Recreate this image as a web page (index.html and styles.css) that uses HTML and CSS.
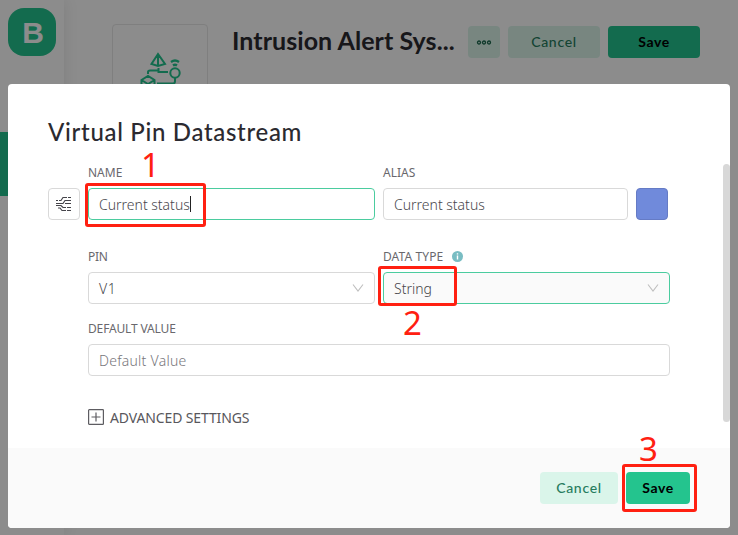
FILE: index.html
```html
<!DOCTYPE html>
<html lang="en">
<head>
<meta charset="utf-8">
<title>Virtual Pin Datastream</title>
<link rel="stylesheet" href="styles.css">
</head>
<body>
<div class="page">
  <aside class="sidebar">
    <div class="logo">B</div>
    <div class="sidebar-active"></div>
  </aside>
  <header class="page-header">
    <div class="device">
      <svg width="44" height="44" viewBox="0 0 44 44" fill="none" stroke="#24c48e" stroke-width="2">
        <path d="M18 2L11.500 12L18 14L25 12ZM18 2V14M8 22V20Q8 18.500 10 18.500H18.500V16M18.500 18.500V20H28M1.500 28L8 24L14.500 28V36L8 40L1.500 36ZM1.500 28L8 32L14.500 28M8 32V40M17 31.500H33Q35 31.500 35 29V26"/>
        <circle cx="35" cy="21" r="4.700"/>
        <path d="M31 10Q35 7 39 10M33 13.500Q35 12 37 13.500" stroke-width="2.300"/>
      </svg>
    </div>
    <h1><span>Intrusion Alert Sys...</span></h1>
    <button class="btn soft more"><svg width="16" height="8" viewBox="0 0 16 8" fill="none" stroke="#1c684d" stroke-width="1.300"><circle cx="3" cy="4.500" r="1.500"/><circle cx="8" cy="4.500" r="1.500"/><circle cx="13" cy="4.500" r="1.500"/></svg></button>
    <button class="btn soft wide">Cancel</button>
    <button class="btn primary wide">Save</button>
  </header>
</div>
<div class="mask"></div>
<main class="modal">
  <h2><span>Virtual Pin Datastream</span></h2>
  <section class="form">
    <div class="row first">
      <button class="icon-box">
        <svg width="16" height="16" viewBox="0 0 16 16" fill="none" stroke="#45444a" stroke-width="1.200"><path d="M0 4.500H2M3 4.500H5L7 1.500H11M12 1.500H15M0 7.500H7L9 4.500H15M9 7.500H15M0 9.500H5L7 11.500H10M11 11.500H15M2 12H4L6 14.500H10M11 14.500H15"/></svg>
      </button>
      <label class="field name"><span class="label">NAME</span><span class="input active"><span class="value">Current status</span><i class="caret"></i></span></label>
      <label class="field alias"><span class="label">ALIAS</span><span class="input"><span class="value">Current status</span></span></label>
      <div class="swatch"></div>
    </div>
    <div class="row second">
      <label class="field half"><span class="label l-pin">PIN</span><span class="input select"><span class="value v-pin">V1</span><svg class="chevron" width="12" height="10" viewBox="0 0 12 10"><path d="M1 1.500L6 8L11 1.500"/></svg></span></label>
      <label class="field half"><span class="label"><span class="l-type">DATA TYPE</span><svg class="info" width="11" height="11" viewBox="0 0 11 11"><circle cx="5.500" cy="5.500" r="5.500" fill="#79bdc3"/><path d="M5.500 2.200V3.400M5.500 4.500V8.600" stroke="#fff" stroke-width="1.400"/></svg></span><span class="input select active filled"><span class="value">String</span><svg class="chevron" width="12" height="10" viewBox="0 0 12 10"><path d="M1 1.500L6 8L11 1.500"/></svg></span></label>
    </div>
    <label class="field default"><span class="label l-default">DEFAULT VALUE</span><span class="input"><span class="value placeholder">Default Value</span></span></label>
    <div class="advanced">
      <svg width="16" height="16" viewBox="0 0 16 16" fill="none" stroke="#5d5c61"><rect x=".6" y=".6" width="14.800" height="14.800" rx=".7" stroke-width="1.200"/><path d="M8 3.500V12.500M3.500 8H12.500" stroke-width="1.200"/></svg>
      <span>ADVANCED SETTINGS</span>
    </div>
  </section>
  <div class="scrollbar"></div>
  <footer><button class="btn soft cancel">Cancel</button><button class="btn primary save">Save</button></footer>
</main>
<div class="mark mark-name"></div><div class="mark mark-type"></div><div class="mark mark-save"></div>
<span class="step step-one">1</span><span class="step step-two">2</span><span class="step step-three">3</span>
</body>
</html>
```
FILE: styles.css
```css
* { box-sizing: border-box; }
body { margin: 0; width: 738px; height: 535px; overflow: hidden; position: relative; font-family: "Noto Sans", sans-serif; font-size: 14px; color: #58575c; }
h1, h2 { margin: 0; font-family: Lato, sans-serif; color: #2b2a30; white-space: nowrap; }
.page { display: flex; height: 535px; background: #fff; }
.sidebar { width: 64px; padding: 8px; box-shadow: 1px 0 14px rgba(0,0,0,.09); }
.logo { width: 48px; height: 48px; border-radius: 16px; background: #24c48e; color: #fff; font: 700 30px/49px "Liberation Sans", sans-serif; text-align: center; padding-left: 2px; }
.sidebar-active { height: 64px; margin: 76px 0 0 -8px; width: 64px; background: #24c48e; }
.page-header { display: flex; align-items: flex-start; padding: 24px 0 0 48px; height: 120px; }
.device { width: 96px; height: 96px; border: 1px solid #e8e8e8; border-radius: 4px; padding: 27px 0 0 27px; flex: none; }
h1 { width: 260px; flex: none; padding-left: 24px; font-size: 25px; line-height: 32px; font-weight: 700; letter-spacing: .06px; }
.btn { height: 32px; border: 0; border-radius: 4px; padding: 0; font: 500 14px/32px Lato, sans-serif; letter-spacing: .7px; display: flex; align-items: center; justify-content: center; flex: none; }
.page-header .btn { margin-top: 2px; }
.soft { background: #daf5ea; color: #267c5e; }
.primary { background: #24c48e; color: #000; font-weight: 700; letter-spacing: .6px; }
.more { width: 32px; }
.page-header .wide { width: 92px; margin-left: 8px; }
.mask { position: absolute; inset: 0; background: rgba(0,0,0,.45); }
.modal { position: absolute; left: 8px; top: 84px; width: 722px; height: 444px; background: #fff; border-radius: 4px; overflow: hidden; display: flex; flex-direction: column; }
h2 { height: 80px; padding: 32px 40px 0; font-size: 24px; line-height: 32px; font-weight: 500; letter-spacing: .68px; }
.form { height: 284px; padding-left: 80px; }
.row { display: flex; gap: 8px; align-items: flex-end; height: 56px; }
.first { margin-left: -40px; }
.second { margin-top: 28px; }
.field { display: flex; flex-direction: column; }
.name, .half { width: 287px; }
.alias { width: 245px; }
.label { height: 24px; line-height: 18px; font-size: 12px; display: flex; color: #69686d; white-space: nowrap; }
.l-pin { letter-spacing: -.3px; }
.l-type { letter-spacing: .1px; }
.l-default { letter-spacing: -.15px; }
.input { height: 32px; border: 1px solid #d9d9d9; border-radius: 4px; padding: 0 10px; display: flex; align-items: center; background: #fff; font-weight: 300; white-space: nowrap; }
.active { border-color: #4bcc9f; }
.filled { background: #fafafa; }
.select { justify-content: space-between; }
.v-pin { letter-spacing: .5px; }
.value { color: #48474c; }
.caret { width: 1px; height: 16px; background: #222; }
.placeholder { color: #77767b; letter-spacing: .25px; }
.chevron { fill: none; stroke: #bfbfbf; stroke-width: 1.1; }
.info { margin: 3px 0 0 9px; }
.icon-box { width: 32px; height: 32px; padding: 0; border: 1px solid #d9d9d9; border-radius: 4px; background: #fff; display: flex; align-items: center; justify-content: center; flex: none; }
.swatch { width: 32px; height: 32px; border: 1px solid #657bc5; border-radius: 4px; background: #708adb; }
.default { width: 582px; margin-top: 16px; }
.advanced { display: flex; align-items: center; gap: 6px; margin-top: 31px; height: 20px; white-space: nowrap; letter-spacing: -.13px; }
.scrollbar { position: absolute; right: 0; top: 80px; width: 7px; height: 258px; border-radius: 4px; background: #d8d8d8; }
footer { height: 80px; background: #fafafa; padding: 24px 40px; display: flex; justify-content: flex-end; gap: 8px; }
.cancel { width: 78px; }
.save { width: 64px; }
.mark { position: absolute; border: 3px solid #ff2011; border-radius: 3px; }
.mark-name { left: 85px; top: 183px; width: 121px; height: 44px; }
.mark-type { left: 378px; top: 266px; width: 79px; height: 40px; }
.mark-save { left: 622px; top: 464px; width: 75px; height: 48px; }
.step { position: absolute; color: #ff2011; font: 33px/36px "Noto Sans", sans-serif; }
.step-one { left: 141px; top: 147px; }
.step-two { left: 403px; top: 305px; }
.step-three { left: 639px; top: 431px; }
```
